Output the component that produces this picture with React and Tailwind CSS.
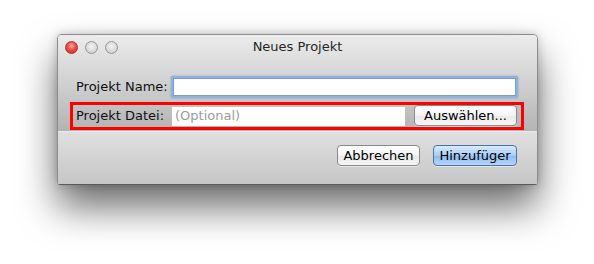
import React from 'react';

const Light = ({ color }) => {
  const styles = {
    red: 'bg-[radial-gradient(circle_at_50%_35%,#ffb0aa_0%,#f2524a_40%,#c4261f_100%)] border-[#a8342d]',
    grey: 'bg-[radial-gradient(circle_at_50%_40%,#f2f2f2_0%,#dcdcdc_55%,#bdbdbd_100%)] border-[#979797]',
  };
  return <div className={`w-[13px] h-[13px] rounded-full border ${styles[color]}`} />;
};

const Button = ({ children, primary, className = '' }) => (
  <button
    className={`h-[21px] rounded-[4px] border text-[13px] leading-none text-black shadow-[0_1px_0_rgba(255,255,255,0.5)] ${
      primary
        ? 'border-[#4f73a8] bg-[linear-gradient(#d8ebfd,#a9cdf6_50%,#8cbaf0_51%,#b6d6fa)]'
        : 'border-[#8a8a8a] bg-[linear-gradient(#ffffff,#f4f4f4_50%,#e9e9e9_51%,#f6f6f6)]'
    } ${className}`}
  >
    {children}
  </button>
);

const App = () => {
  return (
    <div className="w-[594px] h-[264px] bg-white pt-[34px] pl-[57px] font-['DejaVu_Sans',sans-serif] text-[13px] text-[#111]">
      <div className="w-[481px] h-[151px] rounded-t-[5px] rounded-b-[3px] border border-[#8c8c8c] border-b-[#5a5a5a] overflow-hidden shadow-[0_22px_38px_rgba(0,0,0,0.58),0_0_10px_rgba(0,0,0,0.2)] flex flex-col">
        <div className="h-[96px] bg-[linear-gradient(#ececec,#d6d6d6_40%,#b3b3b3)] flex flex-col">
          <div className="h-[23px] grid grid-cols-[1fr_auto_1fr] items-center">
            <div className="flex gap-[7px] pl-[7px] pt-[1px]">
              <Light color="red" />
              <Light color="grey" />
              <Light color="grey" />
            </div>
            <div className="text-[13px] text-[#262626] pt-[1px]">Neues Projekt</div>
            <div />
          </div>

          <div className="mt-[18px] flex items-center pl-[18px]">
            <span className="w-[95px] whitespace-nowrap">Projekt Name:</span>
            <div className="w-[347px] h-[22px] rounded-[2px] bg-[#8fb3dd] p-[2px] shadow-[0_0_2px_#6f9bd0]">
              <div className="w-full h-full bg-white border border-[#7b9cc6]" />
            </div>
          </div>

          <div className="mt-[4px] ml-[12px] w-[454px] h-[28px] border-[3px] border-[#ff0000] flex items-center pl-[3px] pb-[1px]">
            <span className="w-[96px] whitespace-nowrap">Projekt Datei:</span>
            <div className="w-[233px] h-[20px] bg-white border-t border-[#c2c2c2] flex items-center pl-[3px] text-[#9b9b9b]">
              (Optional)
            </div>
            <Button className="ml-[9px] w-[103px] h-[20px]">Auswählen...</Button>
          </div>
        </div>

        <div className="flex-1 border-t border-[#e9e9e9] bg-[linear-gradient(#e0e0e0,#c6c6c6)] flex justify-end items-start pt-[13px] pr-[20px] gap-[13px]">
          <Button className="w-[83px]">Abbrechen</Button>
          <Button primary className="w-[84px]">Hinzufüger</Button>
        </div>
      </div>
    </div>
  );
};

export default App;
